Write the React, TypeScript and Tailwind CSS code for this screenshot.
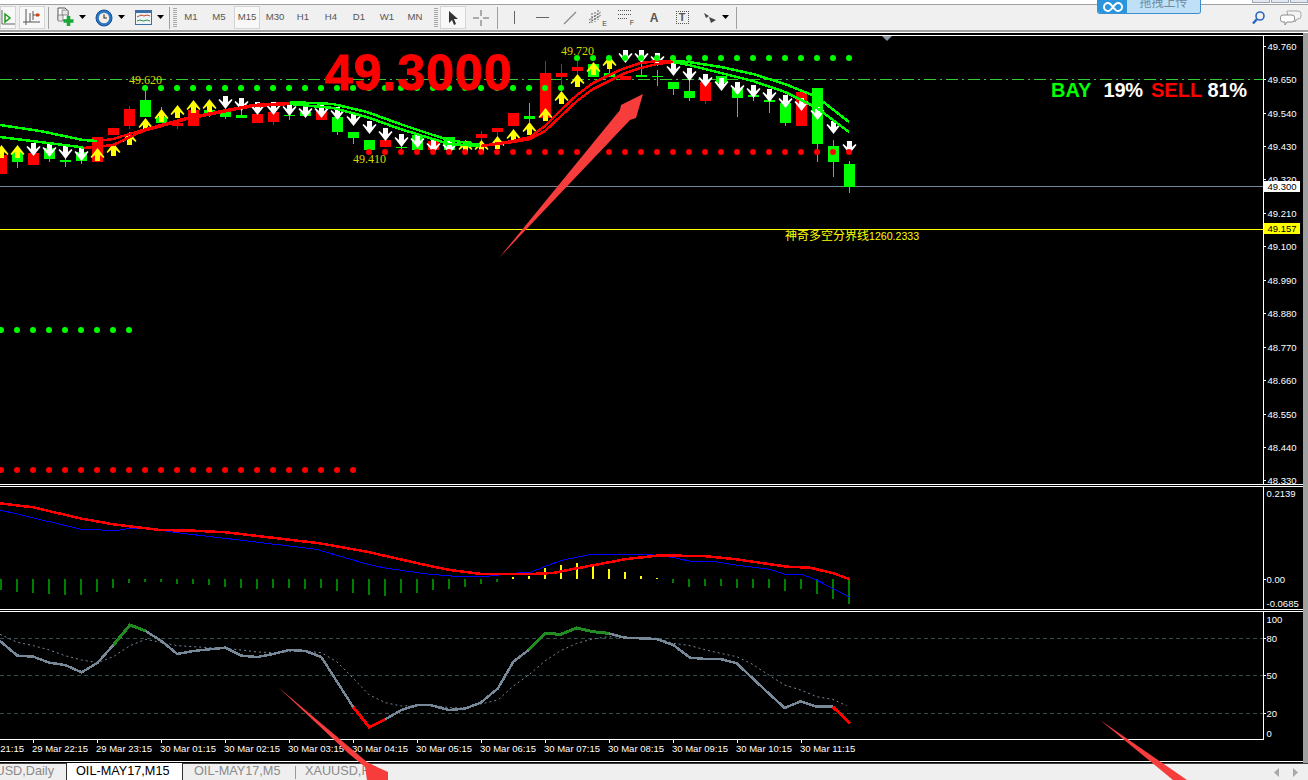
type Pt = [number, number];
type Candle = [number, number, 'r' | 'g', number, number, number, 'y' | 'w'];

const candles: Candle[] = [
  [155, 174, 'r', 155, 174, 145, 'y'], [152, 162, 'g', 152, 168, 145, 'y'], [153, 165, 'r', 153, 165, 143, 'w'],
  [148, 159, 'g', 148, 162, 144, 'w'], [160, 162, 'g', 150, 167, 146, 'w'], [152, 161, 'g', 152, 164, 148, 'w'],
  [137, 162, 'r', 137, 162, 148, 'y'], [128, 135, 'r', 128, 135, 143, 'y'], [109, 126, 'r', 106, 129, 132, 'y'],
  [100, 117, 'g', 87, 117, 118, 'y'], [117, 123, 'g', 107, 123, 109, 'y'], [123, 126, 'r', 123, 129, 105, 'y'],
  [110, 126, 'r', 110, 126, 100, 'y'], [110, 115, 'g', 110, 117, 99, 'y'], [110, 117, 'g', 110, 119, 96, 'w'],
  [115, 118, 'g', 100, 118, 98, 'w'], [114, 123, 'r', 114, 123, 102, 'w'], [112, 122, 'r', 112, 125, 102, 'w'],
  [115, 116, 'g', 103, 120, 103, 'w'], [112, 116, 'g', 112, 116, 105, 'w'], [111, 120, 'r', 111, 120, 105, 'w'],
  [117, 132, 'g', 117, 135, 107, 'w'], [132, 138, 'g', 132, 144, 113, 'w'], [140, 150, 'g', 140, 150, 121, 'w'],
  [140, 147, 'r', 140, 147, 128, 'w'], [147, 148, 'g', 134, 150, 134, 'w'], [135, 150, 'g', 135, 150, 135, 'w'],
  [141, 150, 'r', 141, 150, 140, 'w'], [137, 150, 'g', 137, 155, 141, 'w'], [141, 143, 'g', 141, 150, 140, 'y'],
  [134, 138, 'r', 131, 146, 140, 'y'], [128, 132, 'r', 128, 140, 136, 'y'], [113, 126, 'r', 113, 126, 129, 'y'],
  [116, 119, 'g', 103, 122, 122, 'y'], [73, 118, 'r', 61, 118, 108, 'y'], [73, 77, 'r', 64, 87, 91, 'y'],
  [67, 71, 'r', 61, 74, 74, 'y'], [64, 77, 'g', 64, 77, 62, 'y'], [73, 77, 'g', 68, 77, 56, 'y'],
  [76, 80, 'r', 76, 80, 50, 'w'], [75, 77, 'g', 62, 77, 50, 'w'], [76, 77, 'g', 70, 86, 53, 'w'],
  [82, 89, 'g', 82, 95, 63, 'w'], [91, 98, 'g', 80, 101, 68, 'w'], [82, 101, 'r', 82, 104, 74, 'w'],
  [76, 83, 'g', 76, 83, 78, 'w'], [88, 98, 'g', 88, 117, 82, 'w'], [95, 97, 'g', 95, 101, 85, 'w'],
  [100, 102, 'g', 100, 113, 89, 'w'], [103, 123, 'g', 103, 126, 95, 'w'], [92, 126, 'r', 92, 126, 98, 'w'],
  [88, 144, 'g', 88, 162, 107, 'w'], [146, 162, 'g', 140, 177, 121, 'w'], [164, 187, 'g', 161, 193, 141, 'w'],
];

// moving average bands, top and bottom line
const maUpperGreenA: Pt[] = [[0, 125], [40, 131], [83, 140], [97, 141]];
const maLowerGreenA: Pt[] = [[0, 137], [40, 142], [80, 147], [84, 148]];
const maUpperRed: Pt[] = [[97, 141], [113, 139], [143, 130], [187, 118], [217, 112], [253, 105], [290, 103]];
const maLowerRed: Pt[] = [[84, 148], [113, 145], [143, 131], [187, 119], [217, 113], [253, 106], [290, 104]];
const maUpperGreenB: Pt[] = [[290, 102], [333, 104], [367, 112], [400, 124], [433, 135], [449, 140], [480, 145]];
const maLowerGreenB: Pt[] = [[290, 104], [333, 108], [367, 117], [400, 129], [433, 139], [449, 144], [480, 146]];
const maUpperRed2: Pt[] = [[481, 146], [513, 141], [530, 137], [545, 126], [561, 110], [577, 95], [593, 83], [609, 75], [625, 68], [641, 63], [657, 61], [673, 61]];
const maLowerRed2: Pt[] = [[481, 146], [513, 142], [530, 139], [545, 131], [561, 116], [577, 101], [593, 89], [609, 81], [625, 73], [641, 68], [657, 64], [673, 62]];
const maUpperGreenC: Pt[] = [[673, 61], [689, 62], [721, 67], [753, 74], [785, 84], [817, 97], [849, 122]];
const maLowerGreenC: Pt[] = [[673, 62], [689, 65], [721, 73], [753, 81], [785, 92], [817, 108], [849, 132]];

const macdBars = [11, 13, 14, 15, 16, 16, 13, 9, 4, 3, 3, 5, 5, 6, 8, 9, 10, 9, 9, 10, 9, 12, 14, 16, 17, 14, 14, 11, 10, 8, 5, 3, -2, -3, -11, -14, -16, -14, -10, -7, -3, -1, 4, 8, 7, 7, 9, 9, 9, 12, 10, 15, 20, 25];

const left = (pts: Pt[]): Pt[] => pts.map(([x, y]) => [x / 3, 480 + y / 3]);
const right = (pts: Pt[]): Pt[] => pts.map(([x, y]) => [430 + x / 3, 480 + y / 3]);

const macdSignal = [
  ...left([[0, 70], [100, 82], [240, 115], [340, 133], [480, 150], [580, 152], [680, 157], [960, 190], [1100, 215], [1290, 258]]),
  ...right([[0, 258], [60, 270], [154, 282], [300, 282], [370, 279], [440, 265], [590, 237], [690, 226], [730, 227], [820, 228], [920, 238], [1070, 260], [1140, 263], [1210, 280], [1258, 297]]),
];
const macdMain = [
  ...left([[0, 90], [240, 147], [350, 152], [390, 145], [440, 145], [530, 158], [700, 178], [950, 208], [1100, 252], [1160, 265], [1290, 283]]),
  ...right([[0, 283], [90, 290], [180, 288], [270, 278], [300, 278], [350, 257], [400, 240], [480, 224], [660, 224], [730, 232], [780, 244], [860, 246], [930, 257], [1020, 268], [1065, 283], [1115, 283], [1160, 300], [1256, 350]]),
];
const stochMain = [
  ...left([[0, 483], [52, 527], [100, 530], [148, 548], [195, 555], [245, 577], [293, 548], [340, 495], [390, 435], [437, 453], [484, 483], [532, 522], [580, 513], [628, 508], [676, 503], [724, 527], [772, 531], [820, 522], [868, 510], [916, 513], [964, 531], [1060, 682], [1108, 742], [1156, 718], [1204, 690], [1252, 675]]),
  ...right([[0, 675], [56, 690], [104, 686], [152, 668], [204, 625], [250, 545], [296, 510], [345, 460], [392, 463], [440, 444], [488, 455], [536, 460], [584, 473], [632, 475], [680, 477], [730, 495], [780, 533], [828, 537], [872, 537], [920, 550], [968, 595], [1016, 640], [1064, 684], [1112, 664], [1160, 680], [1208, 680], [1260, 730]]),
];
const stochGreen1 = left([[340, 495], [390, 435], [437, 453]]);
const stochRed1 = left([[1060, 682], [1108, 742], [1156, 718]]);
const stochGreen2 = right([[296, 510], [345, 460], [392, 463], [440, 444], [488, 455], [536, 460]]);
const stochRed2 = right([[1208, 680], [1260, 730]]);
const stochSignal = [
  ...left([[0, 463], [52, 487], [100, 497], [148, 510], [195, 527], [245, 540], [293, 548], [340, 530], [390, 497], [437, 478], [484, 487], [532, 497], [580, 500], [628, 503], [676, 505], [724, 510], [772, 516], [820, 518], [868, 515], [916, 513], [964, 518], [1010, 545], [1060, 595], [1108, 645], [1156, 668], [1204, 678], [1252, 677]]),
  ...right([[0, 675], [56, 683], [104, 684], [152, 672], [204, 660], [250, 618], [296, 585], [345, 543], [392, 512], [440, 490], [488, 477], [536, 470], [584, 472], [632, 473], [680, 475], [730, 490], [780, 497], [828, 510], [872, 520], [920, 530], [968, 553], [1016, 585], [1064, 615], [1112, 630], [1160, 650], [1208, 658], [1250, 677]]),
];

const prices: [string, number][] = [
  ['49.760', 46], ['49.650', 79], ['49.540', 113], ['49.430', 146], ['49.320', 179], ['49.210', 213], ['49.100', 246], ['48.990', 280],
  ['48.880', 313], ['48.770', 347], ['48.660', 380], ['48.550', 414], ['48.440', 447], ['48.330', 480],
];
const times = ['29 Mar 21:15', '29 Mar 22:15', '29 Mar 23:15', '30 Mar 01:15', '30 Mar 02:15', '30 Mar 03:15', '30 Mar 04:15', '30 Mar 05:15', '30 Mar 06:15', '30 Mar 07:15', '30 Mar 08:15', '30 Mar 09:15', '30 Mar 10:15', '30 Mar 11:15'];
const periods = ['M1', 'M5', 'M15', 'M30', 'H1', 'H4', 'D1', 'W1', 'MN'];

const toPoints = (pts: Pt[]) => pts.map(([x, y]) => `${x},${y}`).join(' ');
const range = (from: number, to: number) => Array.from({ length: Math.floor((to - from) / 16) + 1 }, (_, k) => from + k * 16);

function Line({ pts, color, width = 2.5 }: { pts: Pt[]; color: string; width?: number }) {
  return <polyline points={toPoints(pts)} fill="none" stroke={color} strokeWidth={width} shapeRendering="crispEdges" />;
}

function Arrow({ x, top, kind }: { x: number; top: number; kind: 'y' | 'w' }) {
  const pts: Pt[] = kind === 'y'
    ? [[x, top], [x + 7, top + 9], [x + 6, top + 10], [x + 2.5, top + 7], [x + 2.5, top + 13], [x - 2.5, top + 13], [x - 2.5, top + 7], [x - 6, top + 10], [x - 7, top + 9]]
    : [[x, top + 13], [x + 7, top + 4], [x + 6, top + 3], [x + 2.5, top + 6], [x + 2.5, top], [x - 2.5, top], [x - 2.5, top + 6], [x - 6, top + 3], [x - 7, top + 4]];
  return <polygon points={toPoints(pts)} fill={kind === 'y' ? '#ffff00' : '#ffffff'} />;
}

function Dots({ from, to, y, color }: { from: number; to: number; y: number; color: string }) {
  return (
    <>
      {range(from, to).map((x) => (
        <circle key={x} cx={x} cy={y} r={3} fill={color} />
      ))}
    </>
  );
}

function MainChart() {
  return (
    <svg width={1263} height={448} viewBox="0 36 1263 448" className="block font-['Liberation_Sans',sans-serif]">
      <line x1={0} x2={1263} y1={79.5} y2={79.5} stroke="#32cd32" strokeDasharray="12 4 2 4" />
      <line x1={0} x2={1263} y1={186.5} y2={186.5} stroke="#778899" />
      <line x1={0} x2={1263} y1={229.5} y2={229.5} stroke="#ffff00" />
      <polygon points="882,36 892,36 887,41" fill="#8a94a0" />

      {candles.map(([top, bottom, c, wickTop, wickBottom], i) => {
        const x = 1 + i * 16;
        const color = c === 'r' ? '#ff0000' : '#00ff00';
        return (
          <g key={i} shapeRendering="crispEdges">
            <line x1={x + 0.5} x2={x + 0.5} y1={wickTop} y2={wickBottom} stroke={color} />
            <rect x={x - 5} y={top} width={11} height={bottom - top} fill={color} />
          </g>
        );
      })}
      {candles.map(([, , , , , arrowTop, kind], i) => (
        <Arrow key={i} x={1.5 + i * 16} top={arrowTop} kind={kind} />
      ))}

      <Line pts={maUpperGreenA} color="#00ff00" />
      <Line pts={maLowerGreenA} color="#00ff00" />
      <Line pts={maUpperRed} color="#ff0000" />
      <Line pts={maLowerRed} color="#ff0000" />
      <Line pts={maUpperGreenB} color="#00ff00" />
      <Line pts={maLowerGreenB} color="#00ff00" />
      <Line pts={maUpperRed2} color="#ff0000" />
      <Line pts={maLowerRed2} color="#ff0000" />
      <Line pts={maUpperGreenC} color="#00ff00" />
      <Line pts={maLowerGreenC} color="#00ff00" />

      <Dots from={145} to={561} y={88} color="#00ff00" />
      <Dots from={577} to={849} y={58} color="#00ff00" />
      <Dots from={369} to={849} y={152} color="#ff0000" />
      <Dots from={1} to={129} y={330} color="#00ff00" />
      <Dots from={1} to={353} y={470} color="#ff0000" />

      <text x={325} y={90} fontSize={50} fontWeight={700} fill="#ff0000" stroke="#ff0000" strokeWidth={1} letterSpacing={1}>49.3000</text>

      <text x={129} y={84} fontSize={12} fill="#d8d800" fontFamily="'Liberation Serif', serif">49.620</text>
      <text x={561} y={55} fontSize={12} fill="#d8d800" fontFamily="'Liberation Serif', serif">49.720</text>
      <text x={353} y={163} fontSize={12} fill="#d8d800" fontFamily="'Liberation Serif', serif">49.410</text>

      <text x={1051} y={97} fontSize={20} fontWeight={700} fill="#00ff00">BAY</text>
      <text x={1103.5} y={97} fontSize={20} fontWeight={700} fill="#ffffff" letterSpacing={-0.2}>19%</text>
      <text x={1151} y={97} fontSize={20} fontWeight={700} fill="#ff0000">SELL</text>
      <text x={1207.5} y={97} fontSize={20} fontWeight={700} fill="#ffffff" letterSpacing={-0.2}>81%</text>

      <text x={785} y={240} fontSize={12} fill="#ffff00" fontFamily="'Noto Sans CJK SC', sans-serif">
        神奇多空分界线<tspan fontSize={10.6} fontFamily="'Liberation Sans', sans-serif">1260.2333</tspan>
      </text>
    </svg>
  );
}

function MacdChart() {
  return (
    <svg width={1263} height={122} viewBox="0 487 1263 122" className="block">
      <g shapeRendering="crispEdges">
        {macdBars.map((h, i) => (
          <rect
            key={i}
            x={i * 16}
            y={h > 0 ? 579 : 579 + h}
            width={2}
            height={Math.abs(h)}
            fill={h > 0 ? '#008000' : '#ffff00'}
          />
        ))}
      </g>
      <Line pts={macdMain} color="#0000ff" width={1} />
      <Line pts={macdSignal} color="#ff0000" />
    </svg>
  );
}

function StochChart() {
  return (
    <svg width={1263} height={127} viewBox="0 612 1263 127" className="block">
      {[638.5, 675.5, 713.5].map((y) => (
        <line key={y} x1={0} x2={1263} y1={y} y2={y} stroke="#2f4f4f" strokeDasharray="4 3" />
      ))}
      <polyline points={toPoints(stochSignal)} fill="none" stroke="#778899" strokeDasharray="2 3" />
      <Line pts={stochMain} color="#778899" />
      <Line pts={stochGreen1} color="#228b22" width={3} />
      <Line pts={stochGreen2} color="#228b22" width={3} />
      <Line pts={stochRed1} color="#ff0000" width={3} />
      <Line pts={stochRed2} color="#ff0000" width={3} />
    </svg>
  );
}

function Axis({ y, h, labels }: { y: number; h: number; labels: [string, number, number?][] }) {
  return (
    <svg width={39} height={h} viewBox={`1264 ${y} 39 ${h}`} className="block font-['Liberation_Sans',sans-serif]">
      {labels.map(([text, ly, tick]) => (
        <g key={text}>
          {tick !== 0 && <line x1={1264} x2={1266} y1={ly + 0.5} y2={ly + 0.5} stroke="#ffffff" />}
          <text x={1266.5} y={ly + 3.5} fontSize={9.5} fill="#ffffff">{text}</text>
        </g>
      ))}
    </svg>
  );
}

function PriceAxis() {
  return (
    <svg width={39} height={450} viewBox="1264 35 39 450" className="block font-['Liberation_Sans',sans-serif]">
      {prices.map(([text, y]) => (
        <g key={text}>
          <line x1={1264} x2={1266} y1={y + 0.5} y2={y + 0.5} stroke="#ffffff" />
          <text x={1267.5} y={y + 3.5} fontSize={9.5} fill="#ffffff">{text}</text>
        </g>
      ))}
      <rect x={1264} y={181} width={36} height={11} fill="#ffffff" />
      <text x={1267.5} y={190} fontSize={9.5} fill="#000000">49.300</text>
      <rect x={1264} y={223} width={36} height={11} fill="#ffff00" />
      <text x={1267.5} y={232} fontSize={9.5} fill="#000000">49.157</text>
    </svg>
  );
}

function TimeAxis() {
  return (
    <svg width={1263} height={21} viewBox="0 740 1263 21" className="block font-['Liberation_Sans',sans-serif]">
      {times.map((t, i) => (
        <g key={t}>
          <line x1={33.5 + (i - 1) * 64} x2={33.5 + (i - 1) * 64} y1={740} y2={743} stroke="#ffffff" />
          <text x={32 + (i - 1) * 64} y={752} fontSize={9.5} fill="#ffffff">{t}</text>
        </g>
      ))}
    </svg>
  );
}

function Caret({ className = '' }: { className?: string }) {
  return (
    <svg width={10} height={5} viewBox="0 0 10 5" className={`mx-px ${className}`}>
      <polygon points="1,0 8,0 4.5,4" fill="#000000" />
    </svg>
  );
}

function Separator({ className }: { className: string }) {
  return <div className={`w-px h-[22px] bg-[#a0a0a0] ${className}`} />;
}

function Gripper({ className }: { className: string }) {
  return <div className={`w-[4px] h-[20px] bg-[repeating-linear-gradient(to_bottom,#a8a8a8_0,#a8a8a8_1px,transparent_1px,transparent_2px)] ${className}`} />;
}

function ToolButton({ active, children, width = 'w-[28px]' }: { active?: boolean; children: React.ReactNode; width?: string }) {
  return (
    <div className={`flex items-center justify-center h-[23px] shrink-0 ${width} ${active ? 'border border-[#d4d4d4] bg-[#f8f8f8]' : ''}`}>
      {children}
    </div>
  );
}

function Toolbar() {
  return (
    <header className="relative h-[33px] shrink-0 bg-white pt-[4px] font-['Liberation_Sans',sans-serif]">
      <div className="flex items-center h-[28px] border-t border-b-2 border-[#a0a0a0] bg-[#f0f0f0]">
        <ToolButton active width="w-[16px] overflow-hidden">
          <svg width={15} height={18} viewBox="0 0 15 18" className="shrink-0">
            <path d="M1 1v14h13" fill="none" stroke="#666" />
            <polygon points="4,5 9,9 4,13" fill="none" stroke="#1a9a1a" strokeWidth={1.5} />
          </svg>
        </ToolButton>
        <div className="w-[3px]" />
        <ToolButton active width="w-[26px]">
          <svg width={20} height={19} viewBox="0 0 20 19">
            <path d="M4 1v16M1 14h17M11 3v9" fill="none" stroke="#555" />
            <path d="M8 5v9M11 7h7" stroke="#555" />
            <rect x={14} y={5.500} width={3} height={3} fill="#c84818" />
          </svg>
        </ToolButton>
        <Separator className="ml-[3px] mr-[6px]" />
        <div className="flex w-[20px] justify-center">
          <svg width={20} height={21} viewBox="0 0 20 21">
            <path d="M3 1h7l3 3v9H3z" fill="#fff" stroke="#555" />
            <path d="M7 3h6v5H7zM3 8h5v6H3z" fill="#e6e6e6" stroke="#777" strokeWidth={0.8} />
            <path d="M13.500 9v10M8.500 14h10" stroke="#18a83a" strokeWidth={3.6} />
          </svg>
        </div>
        <div className="w-[2px]" />
        <Caret />
        <div className="w-[5px]" />
        <div className="flex w-[20px] justify-center">
          <svg width={18} height={18} viewBox="0 0 18 18">
            <circle cx={9} cy={9} r={8} fill="#2a77c8" stroke="#1b4f91" />
            <circle cx={9} cy={9} r={5.2} fill="#f6efe2" />
            <path d="M9 5.2V9h3" fill="none" stroke="#333" strokeWidth={1.1} />
          </svg>
        </div>
        <div className="w-[2px]" />
        <Caret />
        <div className="w-[5px]" />
        <div className="flex w-[20px] justify-center">
          <svg width={17} height={17} viewBox="0 0 17 17">
            <rect x={0.5} y={1.5} width={16} height={14} fill="#eef4fa" stroke="#3c6ea8" />
            <rect x={1} y={2} width={15} height={2} fill="#3c6ea8" />
            <path d="M2 8l4-2 3 1 3-1 3 1" fill="none" stroke="#c04a22" />
            <path d="M2 12l3-1 3 1 4-1 3 1" fill="none" stroke="#2a9a3a" />
          </svg>
        </div>
        <div className="w-[2px]" />
        <Caret />
        <Separator className="ml-[2px] mr-[3px]" />
        <Gripper className="" />
        {periods.map((p) => (
          <ToolButton key={p} active={p === 'M15'} width={p === 'M15' ? 'w-[26px] mx-px' : undefined}>
            <span className="text-[9.6px] text-[#555]">{p}</span>
          </ToolButton>
        ))}
        <Gripper className="ml-[5px] mr-[2px]" />
        <ToolButton active width="w-[26px]">
          <svg width={12} height={16} viewBox="0 0 12 16">
            <path d="M2 1l0 12 3-3 2 5 2-1-2-5 4 0z" fill="#333" />
          </svg>
        </ToolButton>
        <div className="w-px" />
        <ToolButton>
          <svg width={16} height={16} viewBox="0 0 16 16">
            <path d="M8 0v6M8 10v6M0 8h6M10 8h6" stroke="#666" />
          </svg>
        </ToolButton>
        <Separator className="ml-[2px] mr-[2px]" />
        <ToolButton>
          <svg width={3} height={13} viewBox="0 0 3 13"><path d="M1.5 0v13" stroke="#666" /></svg>
        </ToolButton>
        <ToolButton>
          <svg width={13} height={3} viewBox="0 0 13 3"><path d="M0 1.5h13" stroke="#666" /></svg>
        </ToolButton>
        <ToolButton>
          <svg width={14} height={14} viewBox="0 0 14 14"><path d="M1 13L13 1" stroke="#888" strokeWidth={1.2} /></svg>
        </ToolButton>
        <ToolButton>
          <span className="relative block w-[18px] h-[18px]">
            <svg width={14} height={15} viewBox="0 0 14 15">
              <path d="M0 11L12 3M0 14L12 6M3 4v10M6 3v10M9 1v10" stroke="#555" fill="none" strokeWidth={0.9} strokeDasharray="2 1" />
            </svg>
            <span className="absolute right-0 bottom-0 text-[7px] leading-none text-[#444]">E</span>
          </span>
        </ToolButton>
        <ToolButton>
          <span className="relative block w-[16px] h-[17px]">
            <svg width={14} height={12} viewBox="0 0 14 12">
              <path d="M0 1.5h14M0 5.5h14M0 9.5h10" stroke="#555" strokeDasharray="1 1" />
            </svg>
            <span className="absolute right-0 bottom-0 text-[7px] leading-none text-[#444]">F</span>
          </span>
        </ToolButton>
        <ToolButton>
          <span className="text-[12px] font-bold text-[#555]">A</span>
        </ToolButton>
        <ToolButton>
          <span className="flex items-center justify-center w-[13px] h-[13px] border border-dotted border-[#555] text-[11px] font-bold leading-none text-[#555]">T</span>
        </ToolButton>
        <ToolButton>
          <svg width={14} height={12} viewBox="0 0 14 12">
            <path d="M1 1l5 3-3 2zM6 5l7 3-5 3z" fill="#444" />
          </svg>
        </ToolButton>
        <Caret className="-ml-[3px]" />
        <Separator className="ml-[4px]" />
        <div className="flex-1" />
        <svg width={13} height={14} viewBox="0 0 13 14" className="mr-[15px]">
          <circle cx={8} cy={5} r={4} fill="none" stroke="#2a66c0" strokeWidth={1.6} />
          <path d="M5 8l-4 4.5" stroke="#2a66c0" strokeWidth={2.4} />
        </svg>
        <svg width={22} height={16} viewBox="0 0 22 16" className="mr-[6px]">
          <path d="M7 1h11a3 3 0 0 1 3 3v2a3 3 0 0 1-3 3h-1l-2 3v-3H8z" fill="#f4f4f4" stroke="#a8a8a8" />
          <path d="M3 5h9a2.5 2.5 0 0 1 2.5 2.5v2A2.5 2.5 0 0 1 12 12H7l-2 3v-3H3A2.5 2.5 0 0 1 .5 9.500v-2A2.500 2.500 0 0 1 3 5z" fill="#fff" stroke="#8a8a8a" />
        </svg>
      </div>
      <div className="absolute left-[1097px] top-0 flex h-[14px] w-[104px] overflow-hidden rounded-b-[3px] border border-t-0 border-[#3a8fd0]">
        <div className="flex w-[29px] items-center justify-center bg-[#2a95dd]">
          <svg width={20} height={10} viewBox="0 0 20 10">
            <path d="M5 1a4 4 0 0 0 0 8c4 0 6-8 10-8a4 4 0 0 1 0 8c-4 0-6-8-10-8z" fill="none" stroke="#ffffff" strokeWidth={2} />
          </svg>
        </div>
        <div className="flex flex-1 items-start justify-center overflow-hidden bg-[#bfe0f6]">
          <span className="-translate-y-[5px] text-[12px] leading-[13px] text-[#6e8ba0] font-['Noto_Sans_CJK_SC',sans-serif]">拖拽上传</span>
        </div>
      </div>
      <div className="absolute right-0 top-0 flex gap-px">
        <div className="h-[3px] w-[18px] border border-t-0 border-[#98a8b8] bg-[#e4e8ee]" />
        <div className="h-[3px] w-[18px] border border-t-0 border-[#98a8b8] bg-[#e4e8ee]" />
        <div className="h-[3px] w-[18px] border border-t-0 border-[#98a8b8] bg-[#e4e8ee]" />
      </div>
    </header>
  );
}

function Tabs() {
  return (
    <footer className="relative flex h-[17px] shrink-0 items-end border-t border-[#404040] bg-[#efefef] text-[12.7px] leading-[17px] font-['Liberation_Sans',sans-serif]">
      <div className="flex w-[66px] justify-end pr-[12px] text-[#8a8a8a]">
        <span className="whitespace-nowrap">USD,Daily</span>
      </div>
      <div className="h-[17px] w-[117px] border-x border-[#303030] bg-white pl-[9px] text-black">OIL-MAY17,M15</div>
      <div className="w-[112px] pl-[11px] text-[#8a8a8a]">OIL-MAY17,M5</div>
      <div className="h-[13px] w-px self-center bg-[#9a9a9a]" />
      <div className="pl-[9px] text-[#8a8a8a]">XAUUSD,H4</div>
      <div className="ml-auto mr-[9px] flex gap-[12px] self-center">
        <svg width={7} height={9} viewBox="0 0 7 9"><polygon points="6,0 6,9 1,4.500" fill="#a8a8a8" /></svg>
        <svg width={7} height={9} viewBox="0 0 7 9"><polygon points="1,0 1,9 6,4.500" fill="#a8a8a8" /></svg>
      </div>
    </footer>
  );
}

export default function App() {
  return (
    <div className="relative flex h-[780px] w-[1308px] flex-col overflow-hidden bg-black">
      <Toolbar />
      <main className="flex min-h-0 flex-1 bg-black">
        <div className="w-[1303px] shrink-0">
          <div className="flex flex-col">
            <div className="mt-[2px] flex h-[450px] border-y border-white">
              <div className="w-[1264px] border-r border-white"><MainChart /></div>
              <div className="-my-px"><PriceAxis /></div>
            </div>
            <div className="mt-px flex h-[124px] border-y border-white border-r-0">
              <div className="w-[1264px] border-r border-white"><MacdChart /></div>
              <div className="-my-px">
                <Axis y={486} h={124} labels={[['0.2139', 493, 0], ['0.00', 579], ['-0.0685', 603, 0]]} />
              </div>
            </div>
            <div className="mt-px flex h-[129px] border-t border-white">
              <div className="w-[1264px] border-r border-b border-white"><StochChart /></div>
              <div className="-mt-px">
                <Axis y={611} h={129} labels={[['100', 619, 0], ['80', 638], ['50', 675], ['20', 713], ['0', 733, 0]]} />
              </div>
            </div>
            <TimeAxis />
            <div className="h-px bg-white" />
          </div>
        </div>
        <div className="w-[5px] bg-[#a0a0a0]" />
      </main>
      <Tabs />

      {/* hand drawn red arrows sitting on top of the screenshot */}
      <svg width={1308} height={780} viewBox="0 0 1308 780" className="pointer-events-none absolute left-0 top-0">
        <polygon points="643,94 636,118 630,120 499,258 620,110 621,105" fill="#f73c3c" />
        <polygon points="278,687 367,762 377,767 388,772 388,780 367,780 365,767 348,753" fill="#f73c3c" />
        <polygon points="1100,720 1187,780 1173,780" fill="#f73c3c" />
      </svg>
    </div>
  );
}
